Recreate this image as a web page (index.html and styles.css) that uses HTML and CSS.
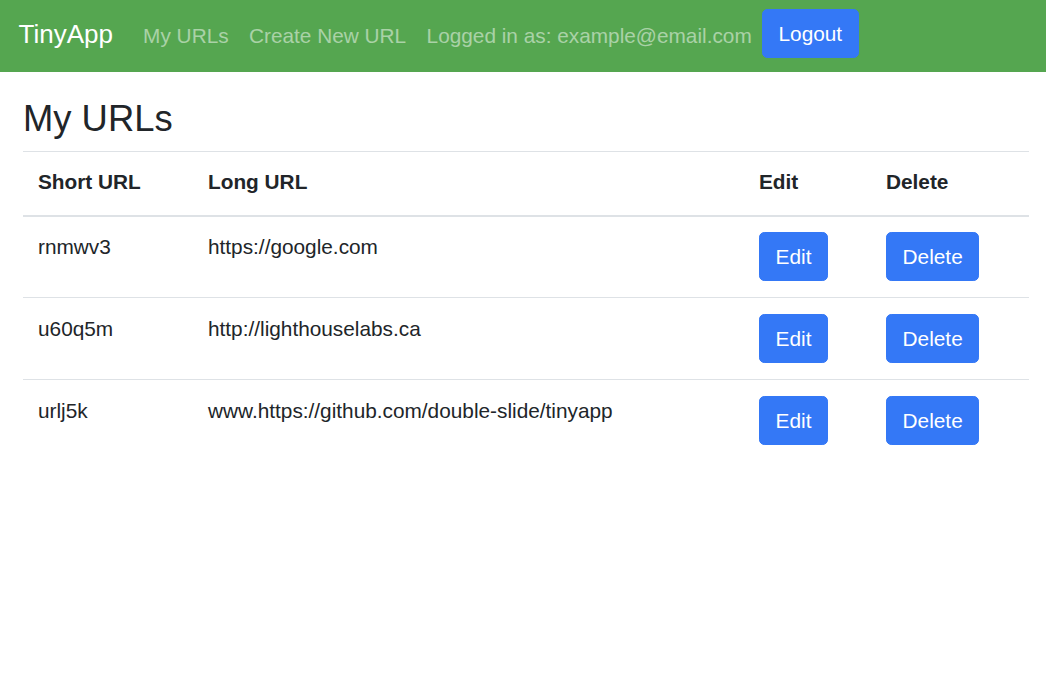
FILE: index.html
```html
<!DOCTYPE html>
<html lang="en">
<head>
<meta charset="utf-8">
<title>TinyApp</title>
<link rel="stylesheet" href="styles.css">
</head>
<body>
<nav class="navbar">
  <a class="brand" href="#">TinyApp</a>
  <a class="nav-link" href="#">My URLs</a>
  <a class="nav-link" href="#">Create New URL</a>
  <span class="nav-link">Logged in as: example@email.com</span>
  <button class="btn btn-nav">Logout</button>
</nav>
<main class="container">
  <h3 class="title">My URLs</h3>
  <table class="table">
    <colgroup>
      <col class="c-short"><col class="c-long"><col class="c-edit"><col class="c-del">
    </colgroup>
    <thead>
      <tr><th>Short URL</th><th>Long URL</th><th>Edit</th><th>Delete</th></tr>
    </thead>
    <tbody>
      <tr>
        <td class="cell-text">rnmwv3</td><td class="cell-text">https://google.com</td>
        <td><button class="btn">Edit</button></td>
        <td><button class="btn">Delete</button></td>
      </tr>
      <tr>
        <td class="cell-text">u60q5m</td><td class="cell-text">http://lighthouselabs.ca</td>
        <td><button class="btn">Edit</button></td>
        <td><button class="btn">Delete</button></td>
      </tr>
      <tr>
        <td class="cell-text">urlj5k</td><td class="cell-text">www.https://github.com/double-slide/tinyapp</td>
        <td><button class="btn">Edit</button></td>
        <td><button class="btn">Delete</button></td>
      </tr>
    </tbody>
  </table>
</main>
</body>
</html>
```
FILE: styles.css
```css
* { box-sizing: border-box; }
html, body { margin: 0; padding: 0; }
body {
  font-family: "Liberation Sans", Arial, sans-serif;
  font-size: 20.8px;
  line-height: 1.5;
  color: #212529;
  background: #fff;
}
.navbar {
  display: flex;
  align-items: center;
  height: 72px;
  padding: 0 20.8px 0 18.5px;
  background: #55a650;
}
.brand {
  font-size: 26px;
  line-height: 39px;
  color: #fff;
  text-decoration: none;
  margin-right: 20px;
  margin-bottom: 3.4px;
}
.nav-link {
  padding: 0 10.2px;
  line-height: 31.2px;
  color: rgba(255,255,255,0.5);
  text-decoration: none;
}
.btn {
  display: block;
  font-family: inherit;
  font-size: 20.8px;
  line-height: 31.2px;
  color: #fff;
  background: #3478f6;
  border: 1.3px solid #3478f6;
  border-radius: 5.2px;
  padding: 7.8px 15.6px;
  cursor: pointer;
}
.btn-nav { margin-bottom: 4.6px; }
.container {
  padding: 0 17px 0 23px;
}
.title {
  font-size: 36.4px;
  font-weight: 500;
  line-height: 1.2;
  margin: 25px 0 10.4px;
}
.table {
  width: 100%;
  border-collapse: collapse;
}
.c-short { width: 170px; }
.c-long { width: 551px; }
.c-edit { width: 127px; }
.c-del { width: 158px; }
.table th, .table td {
  text-align: left;
  vertical-align: top;
  padding: 15.6px 15px;
  border-top: 1.3px solid #dee2e6;
}
.table th {
  font-weight: 700;
  padding-top: 14px;
  padding-bottom: 17.4px;
  border-bottom: 2.6px solid #dee2e6;
}
.table td { padding-bottom: 16.4px; }
.table td.cell-text { padding-top: 14.6px; }
.table tbody tr:first-child td { border-top: 0; }
```
